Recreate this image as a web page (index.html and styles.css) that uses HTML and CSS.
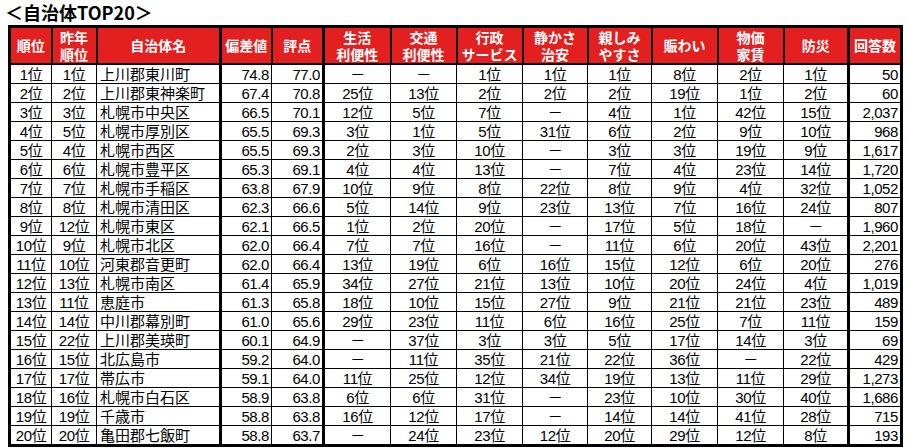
FILE: index.html
```html
<!DOCTYPE html>
<html lang="ja">
<head>
<meta charset="utf-8">
<link rel="stylesheet" href="styles.css">
</head>
<body>
<h1 class="title">＜自治体TOP20＞</h1>
<table class="rank">
<colgroup>
<col class="w42"><col class="w45"><col class="w124"><col class="w51"><col class="w52">
<col class="w67"><col class="w66"><col class="w66"><col class="w65"><col class="w64"><col class="w66"><col class="w66"><col class="w65"><col class="w53">
</colgroup>
<thead>
<tr>
<th>順位</th><th>昨年<br>順位</th><th class="tk">自治体名</th><th>偏差値</th><th class="tk">評点</th>
<th>生活<br>利便性</th><th>交通<br>利便性</th><th>行政<br>サービス</th><th>静かさ<br>治安</th><th>親しみ<br>やすさ</th><th>賑わい</th><th>物価<br>家賃</th><th class="tk">防災</th><th>回答数</th>
</tr>
</thead>
<tbody>
<tr><td>1位</td><td>1位</td><td class="tk">上川郡東川町</td><td>74.8</td><td class="tk">77.0</td><td>－</td><td>－</td><td>1位</td><td>1位</td><td>1位</td><td>8位</td><td>2位</td><td class="tk">1位</td><td>50</td></tr>
<tr><td>2位</td><td>2位</td><td class="tk">上川郡東神楽町</td><td>67.4</td><td class="tk">70.8</td><td>25位</td><td>13位</td><td>2位</td><td>2位</td><td>2位</td><td>19位</td><td>1位</td><td class="tk">2位</td><td>60</td></tr>
<tr><td>3位</td><td>3位</td><td class="tk">札幌市中央区</td><td>66.5</td><td class="tk">70.1</td><td>12位</td><td>5位</td><td>7位</td><td>－</td><td>4位</td><td>1位</td><td>42位</td><td class="tk">15位</td><td>2,037</td></tr>
<tr><td>4位</td><td>5位</td><td class="tk">札幌市厚別区</td><td>65.5</td><td class="tk">69.3</td><td>3位</td><td>1位</td><td>5位</td><td>31位</td><td>6位</td><td>2位</td><td>9位</td><td class="tk">10位</td><td>968</td></tr>
<tr><td>5位</td><td>4位</td><td class="tk">札幌市西区</td><td>65.5</td><td class="tk">69.3</td><td>2位</td><td>3位</td><td>10位</td><td>－</td><td>3位</td><td>3位</td><td>19位</td><td class="tk">9位</td><td>1,617</td></tr>
<tr><td>6位</td><td>6位</td><td class="tk">札幌市豊平区</td><td>65.3</td><td class="tk">69.1</td><td>4位</td><td>4位</td><td>13位</td><td>－</td><td>7位</td><td>4位</td><td>23位</td><td class="tk">14位</td><td>1,720</td></tr>
<tr><td>7位</td><td>7位</td><td class="tk">札幌市手稲区</td><td>63.8</td><td class="tk">67.9</td><td>10位</td><td>9位</td><td>8位</td><td>22位</td><td>8位</td><td>9位</td><td>4位</td><td class="tk">32位</td><td>1,052</td></tr>
<tr><td>8位</td><td>8位</td><td class="tk">札幌市清田区</td><td>62.3</td><td class="tk">66.6</td><td>5位</td><td>14位</td><td>9位</td><td>23位</td><td>13位</td><td>7位</td><td>16位</td><td class="tk">24位</td><td>807</td></tr>
<tr><td>9位</td><td>12位</td><td class="tk">札幌市東区</td><td>62.1</td><td class="tk">66.5</td><td>1位</td><td>2位</td><td>20位</td><td>－</td><td>17位</td><td>5位</td><td>18位</td><td class="tk">－</td><td>1,960</td></tr>
<tr><td>10位</td><td>9位</td><td class="tk">札幌市北区</td><td>62.0</td><td class="tk">66.4</td><td>7位</td><td>7位</td><td>16位</td><td>－</td><td>11位</td><td>6位</td><td>20位</td><td class="tk">43位</td><td>2,201</td></tr>
<tr><td>11位</td><td>10位</td><td class="tk">河東郡音更町</td><td>62.0</td><td class="tk">66.4</td><td>13位</td><td>19位</td><td>6位</td><td>16位</td><td>15位</td><td>12位</td><td>6位</td><td class="tk">20位</td><td>276</td></tr>
<tr><td>12位</td><td>13位</td><td class="tk">札幌市南区</td><td>61.4</td><td class="tk">65.9</td><td>34位</td><td>27位</td><td>21位</td><td>13位</td><td>10位</td><td>20位</td><td>24位</td><td class="tk">4位</td><td>1,019</td></tr>
<tr><td>13位</td><td>11位</td><td class="tk">恵庭市</td><td>61.3</td><td class="tk">65.8</td><td>18位</td><td>10位</td><td>15位</td><td>27位</td><td>9位</td><td>21位</td><td>21位</td><td class="tk">23位</td><td>489</td></tr>
<tr><td>14位</td><td>14位</td><td class="tk">中川郡幕別町</td><td>61.0</td><td class="tk">65.6</td><td>29位</td><td>23位</td><td>11位</td><td>6位</td><td>16位</td><td>25位</td><td>7位</td><td class="tk">11位</td><td>159</td></tr>
<tr><td>15位</td><td>22位</td><td class="tk">上川郡美瑛町</td><td>60.1</td><td class="tk">64.9</td><td>－</td><td>37位</td><td>3位</td><td>3位</td><td>5位</td><td>17位</td><td>14位</td><td class="tk">3位</td><td>69</td></tr>
<tr><td>16位</td><td>15位</td><td class="tk">北広島市</td><td>59.2</td><td class="tk">64.0</td><td>－</td><td>11位</td><td>35位</td><td>21位</td><td>22位</td><td>36位</td><td>－</td><td class="tk">22位</td><td>429</td></tr>
<tr><td>17位</td><td>17位</td><td class="tk">帯広市</td><td>59.1</td><td class="tk">64.0</td><td>11位</td><td>25位</td><td>12位</td><td>34位</td><td>19位</td><td>13位</td><td>11位</td><td class="tk">29位</td><td>1,273</td></tr>
<tr><td>18位</td><td>16位</td><td class="tk">札幌市白石区</td><td>58.9</td><td class="tk">63.8</td><td>6位</td><td>6位</td><td>31位</td><td>－</td><td>23位</td><td>10位</td><td>30位</td><td class="tk">40位</td><td>1,686</td></tr>
<tr><td>19位</td><td>19位</td><td class="tk">千歳市</td><td>58.8</td><td class="tk">63.8</td><td>16位</td><td>12位</td><td>17位</td><td>－</td><td>14位</td><td>14位</td><td>41位</td><td class="tk">28位</td><td>715</td></tr>
<tr><td>20位</td><td>20位</td><td class="tk">亀田郡七飯町</td><td>58.8</td><td class="tk">63.7</td><td>－</td><td>24位</td><td>23位</td><td>12位</td><td>20位</td><td>29位</td><td>12位</td><td class="tk">8位</td><td>193</td></tr>
</tbody>
</table>
</body>
</html>
```

FILE: styles.css
```css
html, body {
  margin: 0;
  padding: 0;
  background: #ffffff;
}
body {
  font-family: "Liberation Sans", "Noto Sans CJK JP", sans-serif;
  color: #000;
}
.title {
  margin: 0;
  padding: 0 0 0 5px;
  height: 25px;
  font-family: "Noto Sans CJK JP", sans-serif;
  font-size: 18px;
  line-height: 24px;
  font-weight: 700;
}
.rank {
  margin-left: 8px;
  border-collapse: collapse;
  table-layout: fixed;
  width: 892px;
  border: 3px solid #000;
}
.w42 { width: 42px; }
.w45 { width: 45px; }
.w124 { width: 124px; }
.w51 { width: 51px; }
.w52 { width: 52px; }
.w53 { width: 53px; }
.w64 { width: 64px; }
.w65 { width: 65px; }
.w66 { width: 66px; }
.w67 { width: 67px; }
.rank th {
  background: #e41f1f;
  color: #fff;
  font-family: "Noto Sans CJK JP", sans-serif;
  font-weight: 700;
  font-size: 14px;
  line-height: 17px;
  height: 35px;
  padding: 0;
  border: 2px solid #000;
  text-align: center;
  white-space: nowrap;
  overflow: hidden;
}
.rank td {
  font-size: 15px;
  line-height: 17px;
  height: 18px;
  padding: 0;
  border: 1px solid #000;
  text-align: center;
  white-space: nowrap;
  overflow: hidden;
  letter-spacing: -0.4px;
}
.rank td:nth-child(3) {
  text-align: left;
  padding-left: 3px;
  letter-spacing: 0;
}
.rank td:nth-child(4),
.rank td:nth-child(5),
.rank td:nth-child(14) {
  text-align: right;
  padding-right: 2px;
}
.rank .tk {
  border-right: 3px solid #000;
}
```
